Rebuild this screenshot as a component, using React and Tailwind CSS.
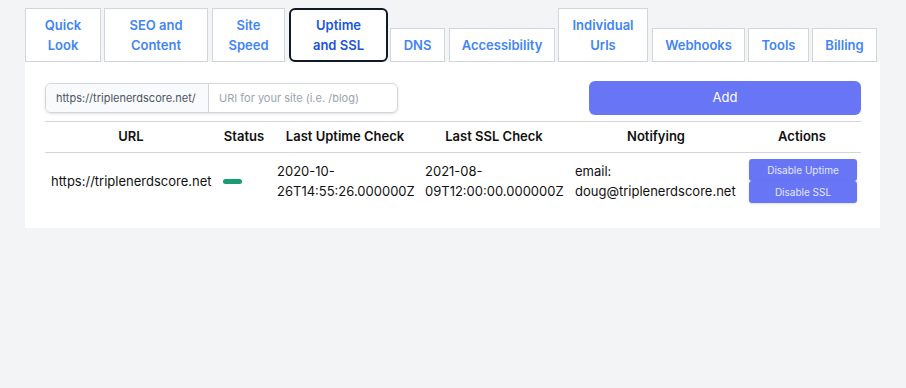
import React from "react";

const tabs = [
  { label: ["Quick", "Look"], w: "w-[76px]", ml: "ml-0" },
  { label: ["SEO and", "Content"], w: "w-[104px]", ml: "ml-[3px]" },
  { label: ["Site", "Speed"], w: "w-[73px]", ml: "ml-[4px]" },
  { label: ["Uptime", "and SSL"], w: "w-[99px]", ml: "ml-[4px]", active: true },
  { label: ["DNS"], w: "w-[55px]", ml: "ml-[2px]" },
  { label: ["Accessibility"], w: "w-[106px]", ml: "ml-[4px]" },
  { label: ["Individual", "Urls"], w: "w-[90px]", ml: "ml-[3px]" },
  { label: ["Webhooks"], w: "w-[93px]", ml: "ml-[4px]" },
  { label: ["Tools"], w: "w-[61px]", ml: "ml-[3px]" },
  { label: ["Billing"], w: "w-[65px]", ml: "ml-[3px]" },
];

export default function App() {
  return (
    <div
      className="min-h-[388px] w-[906px] bg-[#f3f4f6] pt-[8px] pl-[25px]"
      style={{ fontFamily: "Inter, 'Noto Sans', sans-serif" }}
    >
      <div className="flex items-end">
        {tabs.map((t, i) => (
          <div
            key={i}
            className={
              t.active
                ? `${t.w} ${t.ml} flex flex-col items-center justify-center rounded-md border-2 border-[#111827] bg-white py-[5px] text-[13px] leading-[20px] font-semibold text-[#1a56db]`
                : `${t.w} ${t.ml} flex flex-col items-center justify-center border border-[#d2d6dc] bg-white py-[6px] text-[13px] leading-[20px] font-semibold text-[#4285f4]`
            }
          >
            {t.label.map((l, j) => (
              <span key={j} className="whitespace-nowrap">
                {l}
              </span>
            ))}
          </div>
        ))}
      </div>
      <div className="w-[855px] bg-white pt-[19px] pr-[19px] pb-[19px] pl-[20px]">
        <div className="flex items-center justify-between">
          <div className="flex h-[30px] w-[353px] overflow-hidden rounded-md border border-[#d2d6dc] shadow-sm">
            <div className="flex w-[163px] items-center border-r border-[#d2d6dc] bg-[#f9fafb] pl-[10px] text-[11px] text-[#4b5563]">
              https://triplenerdscore.net/
            </div>
            <div className="flex flex-1 items-center pl-[10px] text-[11px] text-[#9ca3af]">
              URI for your site (i.e. /blog)
            </div>
          </div>
          <button className="h-[34px] w-[272px] rounded-md bg-[#6875f5] text-[13px] text-white">
            Add
          </button>
        </div>
        <table className="mt-[6px] w-[816px] table-fixed border-collapse text-[13px] text-[#111]">
          <colgroup>
            <col className="w-[172px]" />
            <col className="w-[54px]" />
            <col className="w-[148px]" />
            <col className="w-[150px]" />
            <col className="w-[174px]" />
            <col className="w-[118px]" />
          </colgroup>
          <thead>
            <tr className="border-t border-b border-[#d2d6dc]">
              {["URL", "Status", "Last Uptime Check", "Last SSL Check", "Notifying", "Actions"].map((h) => (
                <th key={h} className="h-[31px] px-0 text-center align-middle font-semibold whitespace-nowrap">
                  {h}
                </th>
              ))}
            </tr>
          </thead>
          <tbody>
            <tr>
              <td className="py-[6px] pl-[6px] align-middle leading-[20px]">https://triplenerdscore.net</td>
              <td className="py-[6px] pl-[6px] align-middle">
                <div className="h-[5px] w-[19px] rounded-full bg-[#169b73]" />
              </td>
              <td className="py-[6px] pl-[6px] pr-[6px] align-middle leading-[20px]">2020-10-26T14:55:26.000000Z</td>
              <td className="py-[6px] pl-[6px] pr-[6px] align-middle leading-[20px]">2021-08-09T12:00:00.000000Z</td>
              <td className="py-[6px] pl-[6px] pr-[6px] align-middle leading-[20px]">email: doug@triplenerdscore.net</td>
              <td className="py-[6px] pl-[6px] pr-[4px] align-middle">
                <div className="flex flex-col">
                  <button className="h-[22px] w-[108px] rounded-[3px] bg-[#6875f5] text-[10px] text-[#e5e8ff] shadow-sm">
                    Disable Uptime
                  </button>
                  <button className="h-[22px] w-[108px] rounded-[3px] bg-[#6875f5] text-[10px] text-[#e5e8ff] shadow-sm">
                    Disable SSL
                  </button>
                </div>
              </td>
            </tr>
          </tbody>
        </table>
      </div>
    </div>
  );
}
